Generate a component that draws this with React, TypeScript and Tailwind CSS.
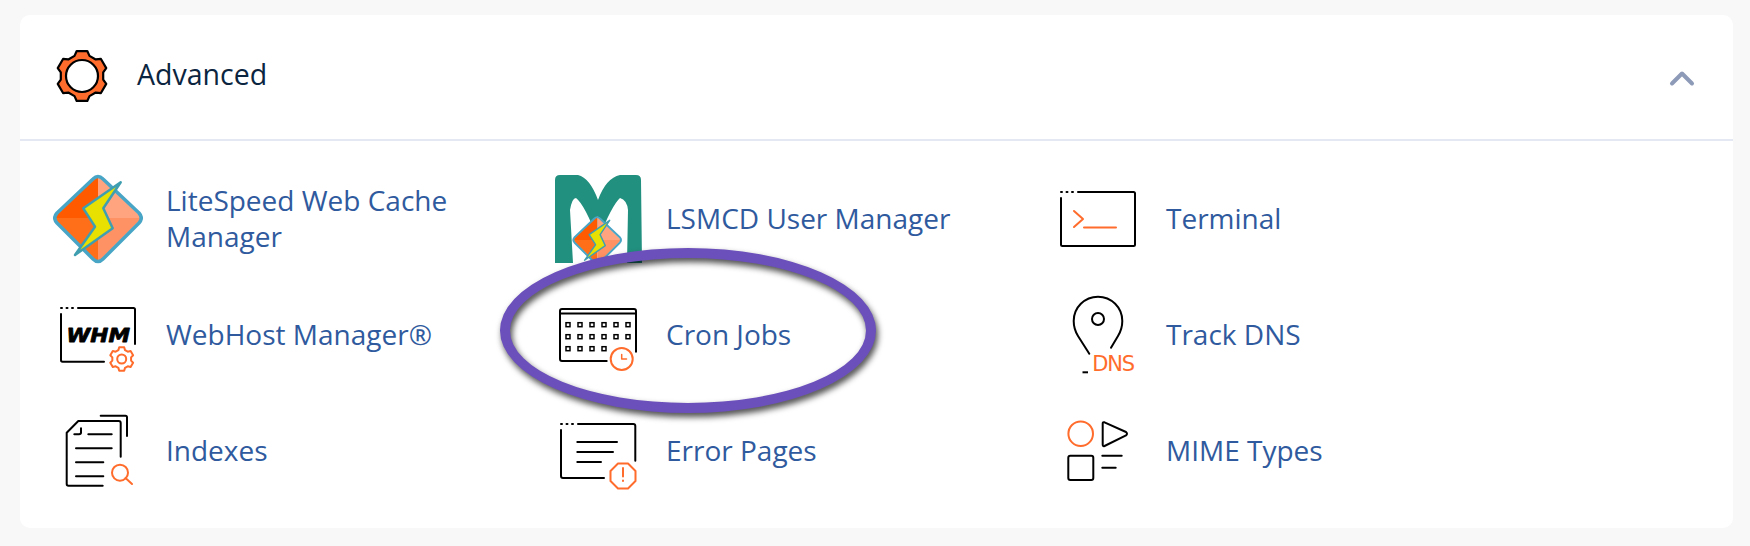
import React from "react";

const OR = "#ff6c2c";
const K = "#000";

function gearPath(cx: number, cy: number, rOut: number, rIn: number, teeth: number, rot: number) {
  const pts: string[] = [];
  const step = (Math.PI * 2) / teeth;
  for (let i = 0; i < teeth; i++) {
    const a = rot + i * step;
    const w = step * 0.2;
    const v = step * 0.34;
    const p = (r: number, t: number) => `${(cx + r * Math.cos(t)).toFixed(2)} ${(cy + r * Math.sin(t)).toFixed(2)}`;
    pts.push(`${i === 0 ? "M" : "L"}${p(rIn, a - v)}`);
    pts.push(`L${p(rOut, a - w)}`);
    pts.push(`L${p(rOut, a + w)}`);
    pts.push(`L${p(rIn, a + v)}`);
  }
  return pts.join(" ") + " Z";
}

function Dots() {
  return (
    <g stroke={K} strokeWidth="2">
      <path d="M13 23h1M18.500 23h1M24 23h1" />
    </g>
  );
}

function LiteSpeedMark() {
  return (
    <g>
      <path d="M98 175 L53 218 L98 218 Z" fill="#ff5a00" />
      <path d="M53 218 L98 263 L98 218 Z" fill="#ff6f1a" />
      <path d="M98 175 L142 218 L98 218 Z" fill="#ffa47f" />
      <path d="M142 218 L98 263 L98 218 Z" fill="#ff9264" />
      <path d="M93 179 Q98 174 103 179 L139 213 Q143.500 218 139 223 L103 259 Q98 264 93 259 L57 223 Q52.500 218 57 213 Z" fill="none" stroke="#48a5c6" strokeWidth="3.500" strokeLinejoin="round" />
      <path d="M120.700 182.300 L83.300 208.300 L95 226.700 L75 255 L112.700 228.300 L103.300 208.300 Z" fill="#e8e000" stroke="#3f9fb0" strokeWidth="2.500" strokeLinejoin="round" />
    </g>
  );
}

function LiteSpeedIcon() {
  return (
    <svg width="100" height="100" viewBox="48 169 100 100" className="shrink-0 overflow-visible blur-[0.4px]">
      <LiteSpeedMark />
    </svg>
  );
}

function LsmcdIcon() {
  return (
    <svg width="100" height="100" viewBox="548 169 100 100" className="shrink-0 overflow-visible blur-[0.4px]">
      <path
        d="M555 263 L555 180 Q555 175 560 175 L578 175 Q590 178 598 200 Q606 178 620 175 L636 175 Q641 175 641 180 L642 263 L627 263 L628 210 Q627 200 620 198 Q612 205 598 240 Q585 205 576 198 Q572 198 570 210 L573 263 Z"
        fill="#22907f"
      />
      <g transform="translate(597.2 240.500) scale(0.55) translate(-98 -219)">
        <LiteSpeedMark />
      </g>
    </svg>
  );
}

function Icon({ children }: { children: React.ReactNode }) {
  return (
    <svg width="100" height="100" viewBox="0 0 100 100" fill="none" strokeWidth="2" strokeLinecap="round" strokeLinejoin="round" className="shrink-0 overflow-visible">
      {children}
    </svg>
  );
}

function TerminalIcon() {
  return (
    <Icon>
      <Dots />
      <path d="M13 29V75.500Q13 77 14.500 77H85.500Q87 77 87 75.500V24.500Q87 23 85.500 23H30" stroke={K} />
      <path d="M26 42L35 50L26 58M36 58.500H68" stroke={OR} />
    </Icon>
  );
}

function WhmIcon() {
  return (
    <Icon>
      <Dots />
      <path d="M13 29V75Q13 76.700 14.500 76.700H56M87 59V24.500Q87 23 85.500 23H30" stroke={K} />
      <text x="18.500" y="57" textLength="63.500" lengthAdjust="spacingAndGlyphs" fontFamily="'DejaVu Sans', sans-serif" fontWeight="700" fontStyle="italic" fontSize="19" fill={K} stroke={K} strokeWidth="0.8">
        WHM
      </text>
      <path d={gearPath(73.7, 74, 12, 9.5, 6, -Math.PI / 2)} stroke={OR} />
      <circle cx="73.700" cy="74" r="4.500" stroke={OR} />
    </Icon>
  );
}

function IndexesIcon() {
  return (
    <Icon>
      <path d="M72.700 55.700V22Q72.700 20 70.700 20H30.300L18.700 31.700V83Q18.700 84.700 20.500 84.700H54.700" stroke={K} />
      <path d="M52.700 14.700H77.500Q79 14.700 79 16.200V35M33 27.300V31.500Q33 33.300 31 33.300H26.300M40.300 33.300H63.700M28 47.300H63.700M28 61.300H55.300M28 75.300H55.300" stroke={K} />
      <circle cx="72" cy="71.700" r="8" stroke={OR} />
      <path d="M77.500 77L84 83" stroke={OR} />
    </Icon>
  );
}

function CronIcon() {
  const xs = [20, 32, 44, 56, 68, 80];
  const ys = [39.7, 51.7, 63.7];
  return (
    <Icon>
      <path d="M58.700 76H14Q12 76 12 74V26Q12 24 14 24H86Q88 24 88 26V66.700M12 28.500H88" stroke={K} />
      {ys.map((y, r) =>
        xs.slice(0, r === 2 ? 4 : 6).map((x) => (
          <rect key={`${x}-${y}`} x={x - 2} y={y - 2} width="4" height="4" stroke={K} strokeWidth="1.500" strokeLinecap="butt" strokeLinejoin="miter" />
        ))
      )}
      <circle cx="73.700" cy="74" r="11" stroke={OR} />
      <path d="M73.700 69.500V74H78.500" stroke={OR} strokeWidth="1.500" />
    </Icon>
  );
}

function ErrorIcon() {
  return (
    <Icon>
      <Dots />
      <path d="M13 29V75Q13 77 15 77H56M87.300 59.700V25Q87.300 23 85.300 23H30M29.300 41H69M29.300 51H65M29.300 61H53" stroke={K} />
      <path d="M70 62.500H80L87.500 70V80L80 87.500H70L62.500 80V70Z" stroke={OR} />
      <path d="M75 67V75.500M75 79.500V80" stroke={OR} />
    </Icon>
  );
}

function DnsIcon() {
  return (
    <Icon>
      <circle cx="50" cy="34" r="6" stroke={K} />
      <path d="M41.300 68.700L30 51Q25.700 44 25.700 36A24.300 24.300 0 0 1 74.300 36Q74.300 44 70 51L63 62.700" stroke={K} />
      <path d="M34.500 87.300H40" stroke={K} strokeLinecap="butt" />
      <text x="44.200" y="85.700" textLength="43" lengthAdjust="spacing" fontFamily="'DejaVu Sans', sans-serif" fontSize="21" fill={OR}>
        DNS
      </text>
    </Icon>
  );
}

function MimeIcon() {
  return (
    <Icon>
      <circle cx="32.700" cy="32.700" r="12.300" stroke={OR} />
      <path d="M54.700 22.500Q54.700 20.700 56.500 21.300L78 31Q80 32.700 78 34.400L56.500 45Q54.700 45.700 54.700 43.500Z" stroke={K} />
      <rect x="20.300" y="54.700" width="25" height="24.300" rx="2" stroke={K} />
      <path d="M54.300 54.700H73.700M54.300 66.700H67.700" stroke={K} />
    </Icon>
  );
}

const items: { label: React.ReactNode; icon: React.ReactNode }[] = [
  { label: <>LiteSpeed Web Cache<br />Manager</>, icon: <LiteSpeedIcon /> },
  { label: "LSMCD User Manager", icon: <LsmcdIcon /> },
  { label: "Terminal", icon: <TerminalIcon /> },
  { label: "WebHost Manager®", icon: <WhmIcon /> },
  { label: "Cron Jobs", icon: <CronIcon /> },
  { label: "Track DNS", icon: <DnsIcon /> },
  { label: "Indexes", icon: <IndexesIcon /> },
  { label: "Error Pages", icon: <ErrorIcon /> },
  { label: "MIME Types", icon: <MimeIcon /> },
];

export default function App() {
  return (
    <div className="h-[546px] w-[1750px] bg-[#f8f8f8] pt-[15px] pl-5 font-['Open_Sans',sans-serif] overflow-hidden">
      <div className="relative w-[1713px] h-[513px] rounded-[10px] bg-white">
        <div className="flex h-[126px] items-center border-b-2 border-[#e4e8f3] pl-[34px] pr-[36px]">
          <svg width="56" height="56" viewBox="0 0 56 56" className="shrink-0 mb-[2px]">
            <path d={gearPath(28, 28, 25.5, 21.5, 6, -Math.PI / 2)} fill={OR} stroke={K} strokeWidth="2.200" strokeLinejoin="round" />
            <circle cx="28" cy="28" r="16" fill="#fff" stroke={K} strokeWidth="2.200" />
          </svg>
          <h2 className="ml-[27px] mb-[6px] flex-1 text-[28.500px] leading-none font-normal text-[#0b2540]">Advanced</h2>
          <svg width="30" height="20" viewBox="0 0 30 20" className="shrink-0 mt-[2px]">
            <path d="M5 15.500L15 5.500L25 15.500" fill="none" stroke="#8e9bb8" strokeWidth="4" strokeLinecap="round" strokeLinejoin="round" />
          </svg>
        </div>
        <div className="grid grid-cols-[500px_500px_500px] grid-rows-[116px_116px_116px] pl-[28px] pt-[20px]">
          {items.map((it, i) => (
            <div key={i} className="flex items-center gap-[18px]">
              {it.icon}
              <span className="pb-[2px] text-[28px] leading-[36px] text-[#2f5a9e]">{it.label}</span>
            </div>
          ))}
        </div>
        <div className="absolute left-[480px] top-[233px] h-[165px] w-[376px] rounded-[50%] border-[10px] border-[#6b4fbb] [filter:drop-shadow(2px_4px_3px_rgba(0,0,0,0.7))]" />
      </div>
    </div>
  );
}
